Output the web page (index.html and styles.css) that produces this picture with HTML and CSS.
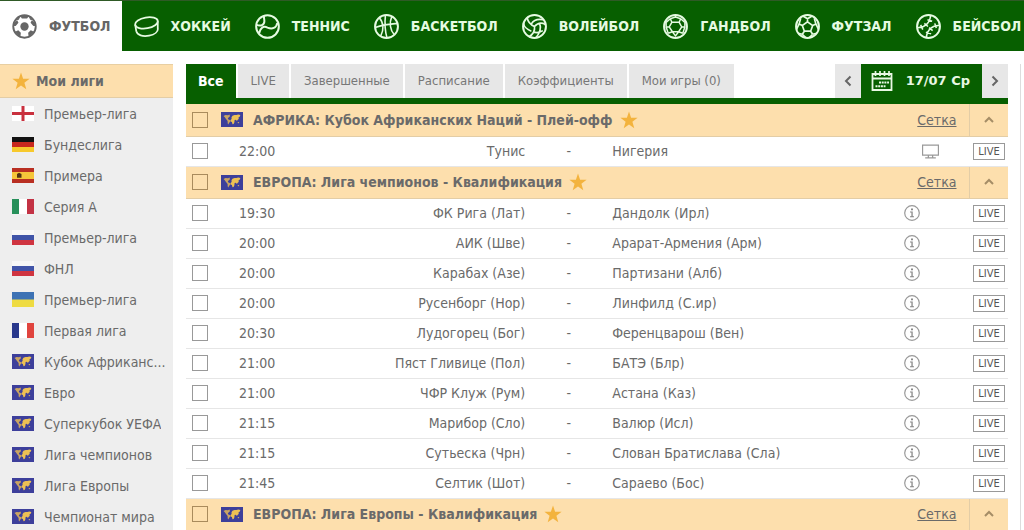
FILE: index.html
```
<!DOCTYPE html>
<html lang="ru">
<head>
<meta charset="utf-8">
<title>Футбол</title>
<link rel="stylesheet" href="styles.css">
</head>
<body>
<svg class="sprite" aria-hidden="true">
  <symbol id="star" viewBox="0 0 18 18"><path d="M9 0.5l2.1 6.2 6.5.1-5.2 4 1.9 6.4L9 13.4l-5.3 3.8 1.900-6.400-5.200-4 6.500-.1z" fill="#f3b33e"/></symbol>
  <symbol id="world" viewBox="0 0 22 15"><path fill="#3d3f9b" d="M0 0h22v15H0z"/><path fill="#c9a463" d="M2.500 4l2-1 2.500.2 1.500-.7.5 1.700-1.200 1-1 1.300.6 1 2 .8.2 1L8 11l-.6 1.500-.7-1-.1-2.500-1.600-2L3.800 5.200z"/><path fill="#edc054" d="M10.500 5.200l1-1.400 2-.9 2 .2 1.800-.6 2 .5-.4 1.500-1.300.8.1 1.600-1 .8-.8 1.400-.8-1.200-1.100-.2-.6 1 .1 1.300-.9 2.100-1.100.2-.6-2.300-1.200-.6-.1-1.500 1-.8zM16.800 10l1.500.6-.5.7-1-.4z"/></symbol>
  <symbol id="info" viewBox="0 0 16 16"><circle cx="8" cy="8" r="7.300" fill="none" stroke="#999" stroke-width="1.200"/><path d="M7 3.500h2v1.700H7zM6 6.500h2.700v4.700H10v1H6v-1h1.400V7.500H6z" fill="#888"/></symbol>
  <symbol id="up" viewBox="0 0 10 8"><path d="M1 6l4-4 4 4" fill="none" stroke="#a58d66" stroke-width="2"/></symbol>
</svg>

<nav class="sports">
  <a class="sport sport--on" href="#"><svg class="ball" viewBox="0 0 24 24"><circle cx="12" cy="12" r="10.800" fill="none" stroke="currentColor" stroke-width="1.800"/><circle cx="12" cy="12" r="4" fill="currentColor"/><path fill="currentColor" d="M7.500 1.500h9L14.500 4.200h-5zM1 9l4-3 1.200 2.500L3.500 11.500H1zM23 9l-4-3-1.200 2.500 2.700 3H23zM3 17l3-1.500 2.500 2.500-.5 4.500zM21 17l-3-1.500-2.500 2.500.5 4.500zM3.500 6L8 2.500 6.500 5.500zM20.500 6L16 2.500l1.500 3z"/></svg>ФУТБОЛ</a>
  <a class="sport" href="#"><svg class="ball" viewBox="0 0 24 24"><g fill="none" stroke="currentColor" stroke-width="1.700"><ellipse cx="12" cy="8.500" rx="11" ry="5.200" transform="rotate(-10 12 8.500)"/><path d="M1.200 10.500l1 6c.8 3.800 6.300 5.500 12.300 4.300 5.500-1.200 9-4 8.300-7.300V7"/></g></svg>ХОККЕЙ</a>
  <a class="sport" href="#"><svg class="ball" viewBox="0 0 24 24"><g fill="none" stroke="currentColor" stroke-width="1.900"><circle cx="12" cy="12" r="10.900"/><path d="M1.500 10.500c4 1.500 7.500 0 7.500-3.500 0-2-.5-3.500-.5-5M4 18.500c1-5 4-7.500 8-5.500 4.500 2 8.500.5 9.500-4.500"/></g></svg>ТЕННИС</a>
  <a class="sport" href="#"><svg class="ball" viewBox="0 0 24 24"><g fill="none" stroke="currentColor" stroke-width="1.500"><circle cx="12" cy="12" r="11" stroke-width="1.900"/><path d="M1 13C8 10.500 16 9.500 22.500 9M11 1c-.8 7-.5 15 1.500 22M5 3.500c4.500 5 4.500 12 1.500 17.500M17 2.500c-2.500 6-1.500 13 2.500 17.500"/></g></svg>БАСКЕТБОЛ</a>
  <a class="sport" href="#"><svg class="ball" viewBox="0 0 24 24"><g fill="none" stroke="currentColor" stroke-width="1.600"><circle cx="12" cy="12" r="11" stroke-width="1.900"/><path d="M12 12C8.500 10.500 5.500 7 5 3.500M9 9.500c2-3.500 6-5 11.500-4M12 12c3-3.500 7-4 10.500-2M12 12c.5 4-2 8-5.500 10M9 16.500C5 15 2 12 1.300 9M17 9c1.500 4.500 0 9.500-3.500 13.500M10.500 17c3.500 1.500 6.500 1 9.500-1"/></g></svg>ВОЛЕЙБОЛ</a>
  <a class="sport" href="#"><svg class="ball" viewBox="0 0 24 24"><g fill="none" stroke="currentColor" stroke-width="1.400"><circle cx="12" cy="12" r="11" stroke-width="1.900"/><path d="M8.500 8h7l2.500 4.500-3 4.500H9l-3-4.500zM8.500 8L7 4.500M15.500 8L17 4.500M7 4.500L12 3l5 1.500M7 4.500L3 8M17 4.500L21 8M3 8v4.500h3M21 8v4.500h-3M3 12.500L5 18.500M21 12.500l-2 6M5 18.500L9 17M19 18.500L15 17M9 17l3 4 3-4M12 3V1M3 8L1.800 7M21 8l1.200-1"/></g></svg>ГАНДБОЛ</a>
  <a class="sport" href="#"><svg class="ball" viewBox="0 0 24 24"><g fill="none" stroke="currentColor" stroke-width="1.600"><circle cx="12" cy="12" r="11" stroke-width="1.900"/><path d="M12 7.500l5 3.500-2 5.500H9L7 11zM12 7.500V4.500M17 11l3-1.500M15 16.500l2 3M9 16.500l-2 3M7 11L4 9.500M7.500 2l4.500 2.500L16.500 2M4 9.500L5.500 4M20 9.500L18.500 4M4 9.500l-2.500 5M20 9.500l2.500 5M7 19.500l-4-1M17 19.500l4-1M7 19.500l3 3M17 19.500l-3 3"/></g></svg>ФУТЗАЛ</a>
  <a class="sport" href="#"><svg class="ball" viewBox="0 0 24 24"><g fill="none" stroke="currentColor" stroke-width="1.500"><circle cx="12" cy="12" r="11" stroke-width="1.900"/><path d="M1.500 13C8 13.500 13.500 9 14 1.500M10 22.500C10.500 15 16 10.500 22.500 11M4.500 10.500l2 4.500M8 9l3.500 3M11 5.500l4.500 1.500M9.500 17.500l5 1.500M12.500 13l3.500 3M18 9l1.500 4.500"/></g></svg>БЕЙСБОЛ</a>
</nav>

<div class="page">
  <aside class="leagues">
    <h2 class="leagues__title"><svg class="star"><use href="#star"/></svg>Мои лиги</h2>
    <ul class="leagues__list">
      <li><a class="league" href="#"><svg class="flag" viewBox="0 0 22 15"><path fill="#fff" d="M0 0h22v15H0z"/><path fill="#c9303e" d="M0 6h22v3H0zM9.500 0h3v15h-3z"/></svg><span class="league__name">Премьер-лига</span></a></li>
      <li><a class="league" href="#"><svg class="flag" viewBox="0 0 22 15"><path fill="#111" d="M0 0h22v5H0z"/><path fill="#c8281e" d="M0 5h22v5H0z"/><path fill="#f7c92c" d="M0 10h22v5H0z"/></svg><span class="league__name">Бундеслига</span></a></li>
      <li><a class="league" href="#"><svg class="flag" viewBox="0 0 22 15"><path fill="#b92f22" d="M0 0h22v15H0z"/><path fill="#f6c63a" d="M0 4h22v7H0z"/><path fill="#513414" d="M5 6l2-1.200L9.500 6v3.700H5z"/></svg><span class="league__name">Примера</span></a></li>
      <li><a class="league" href="#"><svg class="flag" viewBox="0 0 22 15"><path fill="#fff" d="M0 0h22v15H0z"/><path fill="#27905a" d="M0 0h7v15H0z"/><path fill="#c33244" d="M15 0h7v15h-7z"/></svg><span class="league__name">Серия А</span></a></li>
      <li><a class="league" href="#"><svg class="flag" viewBox="0 0 22 15"><path fill="#f7f7f7" d="M0 0h22v5H0z"/><path fill="#4054a8" d="M0 5h22v5H0z"/><path fill="#cf3440" d="M0 10h22v5H0z"/></svg><span class="league__name">Премьер-лига</span></a></li>
      <li><a class="league" href="#"><svg class="flag" viewBox="0 0 22 15"><path fill="#f7f7f7" d="M0 0h22v5H0z"/><path fill="#4054a8" d="M0 5h22v5H0z"/><path fill="#cf3440" d="M0 10h22v5H0z"/></svg><span class="league__name">ФНЛ</span></a></li>
      <li><a class="league" href="#"><svg class="flag" viewBox="0 0 22 15"><path fill="#3d72b4" d="M0 0h22v8H0z"/><path fill="#eedb42" d="M0 7.500h22V15H0z"/></svg><span class="league__name">Премьер-лига</span></a></li>
      <li><a class="league" href="#"><svg class="flag" viewBox="0 0 22 15"><path fill="#fff" d="M0 0h22v15H0z"/><path fill="#29388c" d="M0 0h7v15H0z"/><path fill="#e0443e" d="M15 0h7v15h-7z"/></svg><span class="league__name">Первая лига</span></a></li>
      <li><a class="league" href="#"><svg class="flag"><use href="#world"/></svg><span class="league__name">Кубок Африканс...</span></a></li>
      <li><a class="league" href="#"><svg class="flag"><use href="#world"/></svg><span class="league__name">Евро</span></a></li>
      <li><a class="league" href="#"><svg class="flag"><use href="#world"/></svg><span class="league__name">Суперкубок УЕФА</span></a></li>
      <li><a class="league" href="#"><svg class="flag"><use href="#world"/></svg><span class="league__name">Лига чемпионов</span></a></li>
      <li><a class="league" href="#"><svg class="flag"><use href="#world"/></svg><span class="league__name">Лига Европы</span></a></li>
      <li><a class="league" href="#"><svg class="flag"><use href="#world"/></svg><span class="league__name">Чемпионат мира</span></a></li>
    </ul>
  </aside>

  <main class="games">
    <div class="toolbar">
      <div class="tabs">
        <button class="tab tab--on" type="button">Все</button>
        <button class="tab" type="button">LIVE</button>
        <button class="tab" type="button">Завершенные</button>
        <button class="tab" type="button">Расписание</button>
        <button class="tab" type="button">Коэффициенты</button>
        <button class="tab" type="button">Мои игры (0)</button>
      </div>
      <div class="dates">
        <button class="step" type="button" aria-label="Предыдущий день"><svg class="step__icon" viewBox="0 0 8 12"><path d="M6.500 1.500L2 6l4.500 4.500" fill="none" stroke="currentColor" stroke-width="2"/></svg></button>
        <button class="day" type="button"><svg class="day__icon" viewBox="0 0 22 22"><path d="M1.500 4h19v16h-19zM1 8.500h20" fill="none" stroke="currentColor" stroke-width="1.800"/><path d="M4.500 1v5M9 1v5M13.500 1v5M18 1v5" stroke="currentColor" stroke-width="1.700"/><path d="M8 12.500h10M4.500 16.200h10" stroke="currentColor" stroke-width="2" stroke-dasharray="2 .7"/></svg>17/07 Ср</button>
        <button class="step" type="button" aria-label="Следующий день"><svg class="step__icon" viewBox="0 0 8 12"><path d="M1.500 1.500L6 6l-4.500 4.500" fill="none" stroke="currentColor" stroke-width="2"/></svg></button>
      </div>
    </div>

    <table class="grid">
      <colgroup><col class="c-check"><col class="c-time"><col class="c-home"><col class="c-dash"><col class="c-away"><col class="c-info"><col class="c-tv"><col class="c-live"></colgroup>
      <tbody>
        <tr class="group"><td><input class="check" type="checkbox" aria-label="Кубок Африканских Наций"></td><th colspan="4" scope="rowgroup"><div class="group__name"><svg class="flag"><use href="#world"/></svg>АФРИКА: Кубок Африканских Наций - Плей-офф<svg class="star"><use href="#star"/></svg></div></th><td class="group__link" colspan="2"><a href="#">Сетка</a></td><td class="group__end"><button class="fold" type="button" aria-label="Свернуть"><svg class="fold__icon"><use href="#up"/></svg></button></td></tr>
        <tr class="match"><td><input class="check" type="checkbox" aria-label="Тунис - Нигерия"></td><td class="time">22:00</td><td class="home">Тунис</td><td class="dash">-</td><td>Нигерия</td><td></td><td><svg class="tv" viewBox="0 0 16 14"><path d="M.5 1h15v9.500H.5zM3 13h10M6 10.500V13M10 10.500V13" fill="none" stroke="#999" stroke-width="1.200"/></svg></td><td class="live"><a class="badge" href="#">LIVE</a></td></tr>
      </tbody>
      <tbody>
        <tr class="group"><td><input class="check" type="checkbox" aria-label="Лига чемпионов"></td><th colspan="4" scope="rowgroup"><div class="group__name"><svg class="flag"><use href="#world"/></svg>ЕВРОПА: Лига чемпионов - Квалификация<svg class="star"><use href="#star"/></svg></div></th><td class="group__link" colspan="2"><a href="#">Сетка</a></td><td class="group__end"><button class="fold" type="button" aria-label="Свернуть"><svg class="fold__icon"><use href="#up"/></svg></button></td></tr>
        <tr class="match"><td><input class="check" type="checkbox" aria-label="ФК Рига - Дандолк"></td><td class="time">19:30</td><td class="home">ФК Рига (Лат)</td><td class="dash">-</td><td>Дандолк (Ирл)</td><td><svg class="info"><use href="#info"/></svg></td><td></td><td class="live"><a class="badge" href="#">LIVE</a></td></tr>
        <tr class="match"><td><input class="check" type="checkbox" aria-label="АИК - Арарат-Армения"></td><td class="time">20:00</td><td class="home">АИК (Шве)</td><td class="dash">-</td><td>Арарат-Армения (Арм)</td><td><svg class="info"><use href="#info"/></svg></td><td></td><td class="live"><a class="badge" href="#">LIVE</a></td></tr>
        <tr class="match"><td><input class="check" type="checkbox" aria-label="Карабах - Партизани"></td><td class="time">20:00</td><td class="home">Карабах (Азе)</td><td class="dash">-</td><td>Партизани (Алб)</td><td><svg class="info"><use href="#info"/></svg></td><td></td><td class="live"><a class="badge" href="#">LIVE</a></td></tr>
        <tr class="match"><td><input class="check" type="checkbox" aria-label="Русенборг - Линфилд"></td><td class="time">20:00</td><td class="home">Русенборг (Нор)</td><td class="dash">-</td><td>Линфилд (С.ир)</td><td><svg class="info"><use href="#info"/></svg></td><td></td><td class="live"><a class="badge" href="#">LIVE</a></td></tr>
        <tr class="match"><td><input class="check" type="checkbox" aria-label="Лудогорец - Ференцварош"></td><td class="time">20:30</td><td class="home">Лудогорец (Бог)</td><td class="dash">-</td><td>Ференцварош (Вен)</td><td><svg class="info"><use href="#info"/></svg></td><td></td><td class="live"><a class="badge" href="#">LIVE</a></td></tr>
        <tr class="match"><td><input class="check" type="checkbox" aria-label="Пяст Гливице - БАТЭ"></td><td class="time">21:00</td><td class="home">Пяст Гливице (Пол)</td><td class="dash">-</td><td>БАТЭ (Блр)</td><td><svg class="info"><use href="#info"/></svg></td><td></td><td class="live"><a class="badge" href="#">LIVE</a></td></tr>
        <tr class="match"><td><input class="check" type="checkbox" aria-label="ЧФР Клуж - Астана"></td><td class="time">21:00</td><td class="home">ЧФР Клуж (Рум)</td><td class="dash">-</td><td>Астана (Каз)</td><td><svg class="info"><use href="#info"/></svg></td><td></td><td class="live"><a class="badge" href="#">LIVE</a></td></tr>
        <tr class="match"><td><input class="check" type="checkbox" aria-label="Марибор - Валюр"></td><td class="time">21:15</td><td class="home">Марибор (Сло)</td><td class="dash">-</td><td>Валюр (Исл)</td><td><svg class="info"><use href="#info"/></svg></td><td></td><td class="live"><a class="badge" href="#">LIVE</a></td></tr>
        <tr class="match"><td><input class="check" type="checkbox" aria-label="Сутьеска - Слован Братислава"></td><td class="time">21:15</td><td class="home">Сутьеска (Чрн)</td><td class="dash">-</td><td>Слован Братислава (Сла)</td><td><svg class="info"><use href="#info"/></svg></td><td></td><td class="live"><a class="badge" href="#">LIVE</a></td></tr>
        <tr class="match"><td><input class="check" type="checkbox" aria-label="Селтик - Сараево"></td><td class="time">21:45</td><td class="home">Селтик (Шот)</td><td class="dash">-</td><td>Сараево (Бос)</td><td><svg class="info"><use href="#info"/></svg></td><td></td><td class="live"><a class="badge" href="#">LIVE</a></td></tr>
      </tbody>
      <tbody>
        <tr class="group"><td><input class="check" type="checkbox" aria-label="Лига Европы"></td><th colspan="4" scope="rowgroup"><div class="group__name"><svg class="flag"><use href="#world"/></svg>ЕВРОПА: Лига Европы - Квалификация<svg class="star"><use href="#star"/></svg></div></th><td class="group__link" colspan="2"><a href="#">Сетка</a></td><td class="group__end"><button class="fold" type="button" aria-label="Свернуть"><svg class="fold__icon"><use href="#up"/></svg></button></td></tr>
      </tbody>
    </table>
  </main>
  <div class="edge"></div>
</div>
</body>
</html>
```
FILE: styles.css
```
* { box-sizing: border-box; }
body {
  margin: 0;
  background: #fff;
  color: #6a6a6a;
  font: 14px/18px Tahoma, "DejaVu Sans Condensed", "Noto Sans", sans-serif;
  overflow-x: hidden;
}
a { color: inherit; text-decoration: none; }
button { border: 0; padding: 0; font: inherit; color: inherit; cursor: pointer; }
svg { display: block; flex: none; }
.sprite { position: absolute; width: 0; height: 0; }

.sports {
  display: flex;
  height: 51px;
  background: #075f00;
  border-top: 1px solid #2f5a26;
  overflow: hidden;
}
.sport {
  display: flex;
  flex: none;
  align-items: center;
  gap: 12px;
  padding: 0 12px 0 12px;
  color: #e6fbe2;
  font-weight: bold;
}
.sport--on { padding-right: 11px; background: #fff; color: #666; }
.ball { width: 25px; height: 25px; }

.page { display: flex; align-items: stretch; padding-top: 13px; }

.leagues { width: 173px; flex: none; background: #eee; }
.leagues__title {
  display: flex;
  align-items: center;
  gap: 6px;
  height: 34px;
  margin: 0;
  padding-left: 12px;
  background: #fddfad;
  border-top: 1px solid #e8cfa2;
  border-bottom: 1px solid #e3cda6;
  font-size: 14px;
}
.leagues__list { margin: 0; padding: 0; list-style: none; }
.league {
  display: flex;
  align-items: center;
  gap: 10px;
  height: 31px;
  padding: 0 4px 0 12px;
}
.league__name { overflow: hidden; text-overflow: ellipsis; white-space: nowrap; }
.flag { width: 22px; height: 15px; }
.star { width: 18px; height: 18px; }

.games { flex: 1; min-width: 0; margin: 0 12px 0 13px; }
.edge { width: 4px; border-left: 1px solid #ddd; }

.toolbar {
  display: flex;
  justify-content: space-between;
  height: 40px;
  border-bottom: 6px solid #075f00;
}
.tabs, .dates { display: flex; }
.tabs { gap: 2px; }
.tab { padding: 0 13px; background: #e7e7e7; color: #777; font-size: 13px; }
.tab--on { padding: 0 12px; background: #075f00; color: #fff; font-size: 14px; font-weight: bold; }
.step { display: grid; place-items: center; width: 26px; background: #e7e7e7; color: #666; }
.step__icon { width: 8px; height: 12px; }
.day {
  display: flex;
  align-items: center;
  gap: 13px;
  padding: 0 12px 0 10px;
  background: #075f00;
  color: #e9f8e4;
  font-family: Verdana, "DejaVu Sans", sans-serif;
  font-size: 13px;
  font-weight: bold;
}
.day__icon { width: 22px; height: 22px; }

.grid { width: 100%; table-layout: fixed; border-collapse: collapse; }
.grid td, .grid th { padding: 0; white-space: nowrap; }
.c-check { width: 35px; }
.c-time { width: 70px; }
.c-home { width: 28.5%; }
.c-dash { width: 87px; }
.c-info { width: 20px; }
.c-tv { width: 47px; }
.c-live { width: 39px; }

.group { height: 32px; background: #fddfad; }
.group td, .group th { border-bottom: 1px solid #e3cda6; }
.group__name { display: flex; align-items: center; gap: 10px; font-weight: bold; }
.group__name .star { margin-left: -3px; }
.grid .group__link { padding-right: 12px; text-align: right; text-decoration: underline; }
.group__end { border-left: 1px solid #e3cda6; }
.fold { display: grid; place-items: center; width: 100%; height: 24px; background: none; }
.fold__icon { width: 10px; height: 8px; }

.match { height: 30px; }
.match td { border-bottom: 1px solid #e6e6e6; }
.grid .time { padding-left: 18px; }
.home { text-align: right; }
.dash { text-align: center; }
.info { width: 16px; height: 16px; margin-left: 2px; }
.tv { width: 17px; height: 15px; }
.check {
  display: block;
  appearance: none;
  width: 16px;
  height: 16px;
  margin: 0 0 0 6px;
  border: 1px solid #999;
}
.match .check { background: #fff; }
.group .check { border-color: #a98b5c; }
.badge {
  display: block;
  width: 32px;
  margin-left: 4px;
  border: 1px solid #999;
  color: #555;
  font-size: 11px;
  line-height: 15px;
  text-align: center;
}
```
